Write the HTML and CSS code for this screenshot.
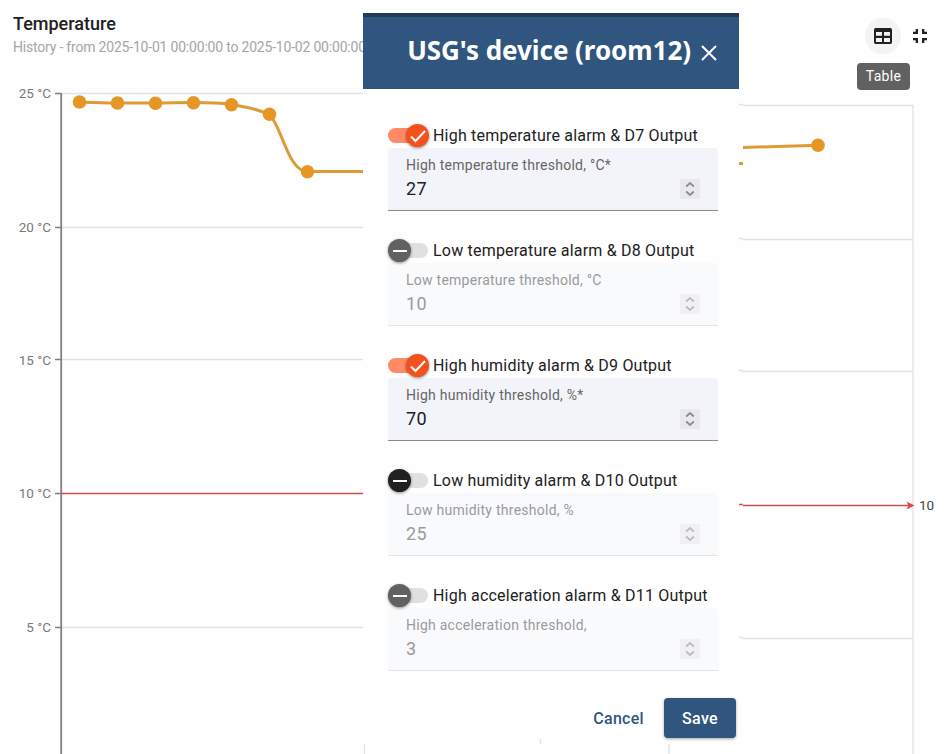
FILE: index.html
```html
<!DOCTYPE html>
<html lang="en">
<head>
    <meta charset="UTF-8">
    <meta name="viewport" content="width=device-width, initial-scale=1.0">
    <title>Temperature</title>
    <link rel="stylesheet" href="styles.css">
</head>
<body>
    <div class="widget">
        <div class="widget-header">
            <div class="widget-titles">
                <h1>Temperature</h1>
                <p class="timewindow">History - from 2025-10-01 00:00:00 to 2025-10-02 00:00:00</p>
            </div>
            <div class="widget-actions">
                <button class="icon-btn icon-btn-active" aria-label="Table">
                    <svg width="18" height="16" viewBox="0 0 18 16"><path fill="#212121" fill-rule="evenodd" d="M2.2 0h13.6A2 2 0 0 1 18 2v12a2 2 0 0 1-2.200 2H2.200A2 2 0 0 1 0 14V2A2 2 0 0 1 2.200 0zM2 4v3.800h6V4zM10 4v3.800h6V4zM2 10v4h6v-4zM10 10v4h6v-4z"/></svg>
                    <span class="tooltip">Table</span>
                </button>
                <button class="icon-btn icon-btn-small" aria-label="Exit fullscreen">
                    <svg width="14" height="14" viewBox="0 0 14 14"><path fill="#212121" d="M0 2.700h2.700V0h2.300v5H0zM9 0h2.300v2.700H14V5H9zM0 9h5v5H2.700v-2.700H0zM9 9h5v2.300h-2.700V14H9z"/></svg>
                </button>
            </div>
        </div>

        <svg class="chart" width="945" height="674" viewBox="0 80 945 674">
            <!-- grid -->
            <g class="grid">
                <path d="M62 93.500H363M62 227.500H363M62 359.500H363M62 627.500H363"/>
                <path d="M739 104.500h4M743 105.500H913M739 238.500h4M743 239.500H913M739 370.500h4M743 371.500H913M739 637.500h4M743 638.500H913"/>
                <path d="M913 105V754M364.500 744V754M540.500 739V744M669 744V754"/>
            </g>
            <!-- y axis -->
            <path class="axis" d="M61.200 93V754"/>
            <path class="ticks" d="M55 93.500h6M55 227.500h6M55 359.500h6M55 493.500h6M55 627.500h6"/>
            <g class="axis-labels">
                <text x="51" y="98">25 °C</text>
                <text x="51" y="232">20 °C</text>
                <text x="51" y="365">15 °C</text>
                <text x="51" y="498">10 °C</text>
                <text x="51" y="632">5 °C</text>
            </g>
            <!-- threshold -->
            <path class="threshold" d="M61 493.500H363M739 504.500h4M743 505.500H910"/>
            <path class="threshold-arrow" d="M906.500 501.500l8 4-8 4 2-4z"/>
            <text class="threshold-label" x="919" y="510">10</text>
            <!-- series -->
            <path class="series" d="M79.500 102C92 102.500 105 103 117.500 103H155.500C168 103 181 102.600 193.500 102.600C206 102.600 219 102.800 231.500 104.500C244 106.500 258 109 269.500 114.500C282 127 288 171.500 307.500 171.500H363M739 163.500h4M743 147.500L818 145.200"/>
            <g class="points">
                <circle cx="79.500" cy="102" r="6.800"/>
                <circle cx="117.500" cy="103" r="6.800"/>
                <circle cx="155.500" cy="103.300" r="6.800"/>
                <circle cx="193.500" cy="102.800" r="6.800"/>
                <circle cx="231.500" cy="104.700" r="6.800"/>
                <circle cx="269.500" cy="114.300" r="6.800"/>
                <circle cx="307.500" cy="171.800" r="6.800"/>
                <circle cx="818" cy="145.300" r="6.800"/>
            </g>
        </svg>
    </div>

    <div class="dialog">
        <div class="dialog-header">
            <h2>USG's device (room12)</h2>
            <button class="close-btn" aria-label="Close">
                <svg width="16" height="16" viewBox="0 0 16 16"><path d="M1 1l14 14M15 1L1 15" stroke="#fff" stroke-width="2"/></svg>
            </button>
        </div>
        <form class="dialog-body">
            <div class="alarm">
                <div class="alarm-toggle">
                    <span class="toggle toggle-on"><span class="thumb"><svg width="16" height="14" viewBox="0 0 16 14"><path d="M1 7.500l4.500 4.500L15 2" /></svg></span></span>
                    <span>High temperature alarm &amp; D7 Output</span>
                </div>
                <div class="field">
                    <div><div class="field-label">High temperature threshold, °C*</div><div class="field-value">27</div></div>
                    <span class="spinner"><svg width="10" height="14" viewBox="0 0 10 14"><path d="M1.200 4.500L5 1l3.800 3.500M1.200 9.500L5 13l3.800-3.500"/></svg></span>
                </div>
            </div>
            <div class="alarm">
                <div class="alarm-toggle">
                    <span class="toggle"><span class="thumb"><svg width="14" height="2" viewBox="0 0 14 2"><path d="M0 1h14"/></svg></span></span>
                    <span>Low temperature alarm &amp; D8 Output</span>
                </div>
                <div class="field disabled">
                    <div><div class="field-label">Low temperature threshold, °C</div><div class="field-value">10</div></div>
                    <span class="spinner"><svg width="10" height="14" viewBox="0 0 10 14"><path d="M1.200 4.500L5 1l3.800 3.500M1.200 9.500L5 13l3.800-3.500"/></svg></span>
                </div>
            </div>
            <div class="alarm">
                <div class="alarm-toggle">
                    <span class="toggle toggle-on"><span class="thumb"><svg width="16" height="14" viewBox="0 0 16 14"><path d="M1 7.500l4.500 4.500L15 2" /></svg></span></span>
                    <span>High humidity alarm &amp; D9 Output</span>
                </div>
                <div class="field">
                    <div><div class="field-label">High humidity threshold, %*</div><div class="field-value">70</div></div>
                    <span class="spinner"><svg width="10" height="14" viewBox="0 0 10 14"><path d="M1.200 4.500L5 1l3.800 3.500M1.200 9.500L5 13l3.800-3.500"/></svg></span>
                </div>
            </div>
            <div class="alarm">
                <div class="alarm-toggle">
                    <span class="toggle toggle-focus"><span class="thumb"><svg width="14" height="2" viewBox="0 0 14 2"><path d="M0 1h14"/></svg></span></span>
                    <span>Low humidity alarm &amp; D10 Output</span>
                </div>
                <div class="field disabled">
                    <div><div class="field-label">Low humidity threshold, %</div><div class="field-value">25</div></div>
                    <span class="spinner"><svg width="10" height="14" viewBox="0 0 10 14"><path d="M1.200 4.500L5 1l3.800 3.500M1.200 9.500L5 13l3.800-3.500"/></svg></span>
                </div>
            </div>
            <div class="alarm">
                <div class="alarm-toggle">
                    <span class="toggle"><span class="thumb"><svg width="14" height="2" viewBox="0 0 14 2"><path d="M0 1h14"/></svg></span></span>
                    <span>High acceleration alarm &amp; D11 Output</span>
                </div>
                <div class="field disabled">
                    <div><div class="field-label">High acceleration threshold,</div><div class="field-value">3</div></div>
                    <span class="spinner"><svg width="10" height="14" viewBox="0 0 10 14"><path d="M1.200 4.500L5 1l3.800 3.500M1.200 9.500L5 13l3.800-3.500"/></svg></span>
                </div>
            </div>
        </form>
        <div class="dialog-actions">
            <button class="btn btn-text">Cancel</button>
            <button class="btn btn-primary">Save</button>
        </div>
    </div>
</body>
</html>
```
FILE: styles.css
```css
* { box-sizing: border-box; }
body { font-family: Roboto, Arial, sans-serif; background-color: #fefefe; color: #212121; margin: 0; overflow: hidden; }
h1, h2, p { margin: 0; }
button { font-family: inherit; border: none; background: none; padding: 0; cursor: pointer; }
svg { display: block; }

.widget { width: 945px; height: 754px; }
.widget-header { display: flex; justify-content: space-between; height: 80px; padding: 13px 18px 0 13px; }
.widget-header h1 { font-size: 18px; font-weight: 500; line-height: 22px; }
.timewindow { font-size: 14px; line-height: 24px; letter-spacing: -0.2px; color: #a6a6a6; white-space: nowrap; }
.widget-actions { display: flex; align-items: center; height: 36px; gap: 12px; margin-top: 5px; }
.icon-btn { position: relative; display: flex; align-items: center; justify-content: center; width: 36px; height: 36px; border-radius: 50%; }
.icon-btn-active { background-color: #f3f3f3; }
.icon-btn-small { width: 14px; }
.tooltip { position: absolute; top: 45px; left: -8px; width: 53px; height: 27px; line-height: 27px; border-radius: 4px; background-color: #616161; color: #fff; font-size: 14px; letter-spacing: 0.3px; text-align: center; }

.grid path { stroke: #e2e2e4; stroke-width: 1.3; fill: none; }
.axis { stroke: #808080; stroke-width: 1.8; }
.ticks { stroke: #808080; stroke-width: 1.4; }
.axis-labels text { font-size: 13.500px; fill: #7a7a7a; text-anchor: end; }
.threshold { stroke: #c9504c; stroke-width: 1.3; fill: none; }
.threshold-arrow { fill: #dc4a4a; }
.threshold-label { font-size: 13.500px; fill: #444; }
.series { stroke: #dd9a35; stroke-width: 3; fill: none; }
.points circle { fill: #e69624; }

/* alarm settings dialog */
.dialog { position: absolute; top: 13px; left: 363px; width: 376px; height: 726px; background-color: #fefefe; }
.dialog-header { display: flex; align-items: center; justify-content: flex-end; height: 76px; padding-right: 22px; gap: 10px; background-color: #305680; border-top: 4px solid #223a54; color: #fff; }
.dialog-header h2 { font-family: "Noto Sans", "Open Sans", sans-serif; font-size: 26px; font-weight: 700; line-height: 36px; letter-spacing: -0.05px; margin-bottom: 6px; white-space: nowrap; }
.dialog-body { display: flex; flex-direction: column; gap: 27px; padding: 34px 21px 0 25px; }
.alarm-toggle { display: flex; align-items: center; gap: 5px; height: 25px; font-size: 16px; letter-spacing: 0.2px; white-space: nowrap; }
.toggle { display: flex; align-items: center; width: 40px; height: 15px; border-radius: 8px; background-color: #e0e0e0; }
.thumb { display: flex; flex: none; align-items: center; justify-content: center; width: 23px; height: 23px; border-radius: 50%; background-color: #616161; box-shadow: 0 1px 3px rgba(0,0,0,0.45); }
.thumb path { stroke: #fff; stroke-width: 2; fill: none; }
.toggle-on { justify-content: flex-end; background-color: #ff8a65; }
.toggle-on .thumb { margin-right: -1px; background-color: #f4511e; }
.toggle-focus .thumb { background-color: #212121; }
.field { display: flex; justify-content: space-between; height: 63px; padding: 7px 18px 0; background-color: #f3f4f9; border-bottom: 1px solid #8b8b8f; border-radius: 4px 4px 0 0; }
.field-label { font-size: 14px; line-height: 20px; letter-spacing: 0.26px; color: #666; }
.field-value { font-size: 18px; line-height: 28px; letter-spacing: 0.3px; }
.spinner { display: flex; align-items: center; justify-content: center; width: 20px; height: 20px; margin-top: 24px; background-color: #e9e8ec; }
.spinner path { stroke: #8c8c90; stroke-width: 1.8; fill: none; }
.field.disabled { background-color: #f9fafc; border-bottom-color: #e3e4e7; }
.disabled .field-label, .disabled .field-value { color: #9b9b9b; }
.disabled .spinner { background-color: #f1f1f3; }
.disabled .spinner path { stroke: #bcbcbf; }
.dialog-actions { display: flex; justify-content: flex-end; gap: 20px; padding: 27px 3px 0 0; }
.btn { height: 40px; border-radius: 4px; font-size: 16px; font-weight: 500; letter-spacing: 0.3px; }
.btn-text { color: #305680; }
.btn-primary { width: 72px; background-color: #305680; color: #fff; box-shadow: 0 1px 3px rgba(0,0,0,0.35); }
```
